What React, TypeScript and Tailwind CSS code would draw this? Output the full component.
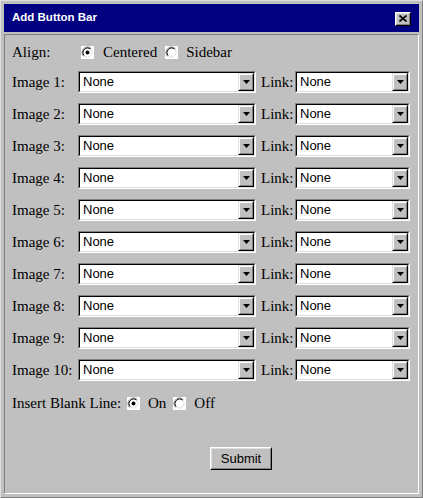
import React from "react";

const serif = { fontFamily: '"Liberation Serif", "Times New Roman", serif' };

function Radio({ checked }: { checked?: boolean }) {
  return (
    <svg width="13" height="13" viewBox="0 0 13 13" className="shrink-0">
      <rect x="0" y="0" width="13" height="13" fill="#ffffff" />
      <path d="M2.61 10.39 A5.5 5.5 0 0 1 10.39 2.61" fill="none" stroke="#808080" strokeWidth="1" />
      <path d="M3.32 9.68 A4.5 4.5 0 0 1 9.68 3.32" fill="none" stroke="#000000" strokeWidth="1" />
      <path d="M9.68 3.32 A4.5 4.5 0 0 1 3.32 9.68" fill="none" stroke="#dfdfdf" strokeWidth="1" />
      {checked && <circle cx="6.5" cy="6.5" r="2" fill="#000000" />}
    </svg>
  );
}

function Select({ w }: { w: string }) {
  return (
    <div className={`${w} h-[22px] shrink-0 border border-t-[#808080] border-l-[#808080] border-b-white border-r-white`}>
      <div className="h-full w-full border border-t-black border-l-black border-b-[#dfdfdf] border-r-[#dfdfdf] bg-white flex items-stretch">
        <span
          className="flex-1 pl-[3px] text-[13px] leading-[18px] text-black"
          style={{ fontFamily: '"Liberation Sans", Arial, sans-serif' }}
        >
          None
        </span>
        <div className="w-[16px] border border-t-[#dfdfdf] border-l-[#dfdfdf] border-b-black border-r-black">
          <div className="h-full w-full border border-t-white border-l-white border-b-[#808080] border-r-[#808080] bg-[#c0c0c0] flex items-center justify-center">
            <svg width="7" height="4" viewBox="0 0 7 4">
              <path d="M0 0 H7 L3.5 4 Z" fill="#000000" />
            </svg>
          </div>
        </div>
      </div>
    </div>
  );
}

export default function App() {
  const rows = [1, 2, 3, 4, 5, 6, 7, 8, 9, 10];
  return (
    <div className="w-[423px] h-[498px] bg-[#c0c0c0] border border-t-[#dfdfdf] border-l-[#dfdfdf] border-r-[#808080] border-b-[#808080] p-[3px] flex flex-col">
      <div className="h-[28px] bg-[#000080] flex items-center justify-between pl-[8px] pr-[8px] shrink-0">
        <span
          className="text-white font-bold text-[11.5px] leading-none"
          style={{ fontFamily: '"Liberation Sans", Arial, sans-serif' }}
        >
          Add Button Bar
        </span>
        <div className="w-[16px] h-[14px] mt-[1px] border border-t-white border-l-white border-b-black border-r-black">
          <div className="h-full w-full border border-t-[#dfdfdf] border-l-[#dfdfdf] border-b-[#808080] border-r-[#808080] bg-[#c0c0c0] flex items-center justify-center">
            <svg width="8" height="7" viewBox="0 0 8 7">
              <path d="M0.5 0.5 L7.5 6.5 M7.5 0.5 L0.5 6.5" stroke="#000000" strokeWidth="1.6" />
            </svg>
          </div>
        </div>
      </div>
      <div
        className="mt-[2px] flex-1 border border-t-[#808080] border-l-[#808080] border-b-white border-r-white pt-[2px] pl-[7px] flex flex-col text-[15px] text-black"
        style={serif}
      >
        <div className="h-[29px] pt-[1px] flex items-center">
          <span className="w-[69px] shrink-0">Align:</span>
          <Radio checked />
          <span className="ml-[9px]">Centered</span>
          <span className="ml-[8px] flex items-center">
            <Radio />
          </span>
          <span className="ml-[8px]">Sidebar</span>
        </div>
        {rows.map((n) => (
          <div key={n} className="h-[32px] flex items-center">
            <span className="w-[66px] shrink-0 whitespace-nowrap">Image {n}:</span>
            <Select w="w-[178px]" />
            <span className="w-[34px] ml-[5px] shrink-0">Link:</span>
            <Select w="w-[115px]" />
          </div>
        ))}
        <div className="h-[34px] flex items-center">
          <span className="w-[115px] shrink-0">Insert Blank Line:</span>
          <Radio checked />
          <span className="ml-[8px]">On</span>
          <span className="ml-[7px] flex items-center">
            <Radio />
          </span>
          <span className="ml-[8px]">Off</span>
        </div>
        <div className="mt-[27px] pl-[198px]">
          <div className="w-[62px] h-[23px] border border-t-white border-l-white border-b-black border-r-black">
            <div
              className="h-full w-full border border-t-[#dfdfdf] border-l-[#dfdfdf] border-b-[#808080] border-r-[#808080] bg-[#c0c0c0] flex items-center justify-center text-[13px]"
              style={{ fontFamily: '"Liberation Sans", Arial, sans-serif' }}
            >
              Submit
            </div>
          </div>
        </div>
      </div>
    </div>
  );
}
